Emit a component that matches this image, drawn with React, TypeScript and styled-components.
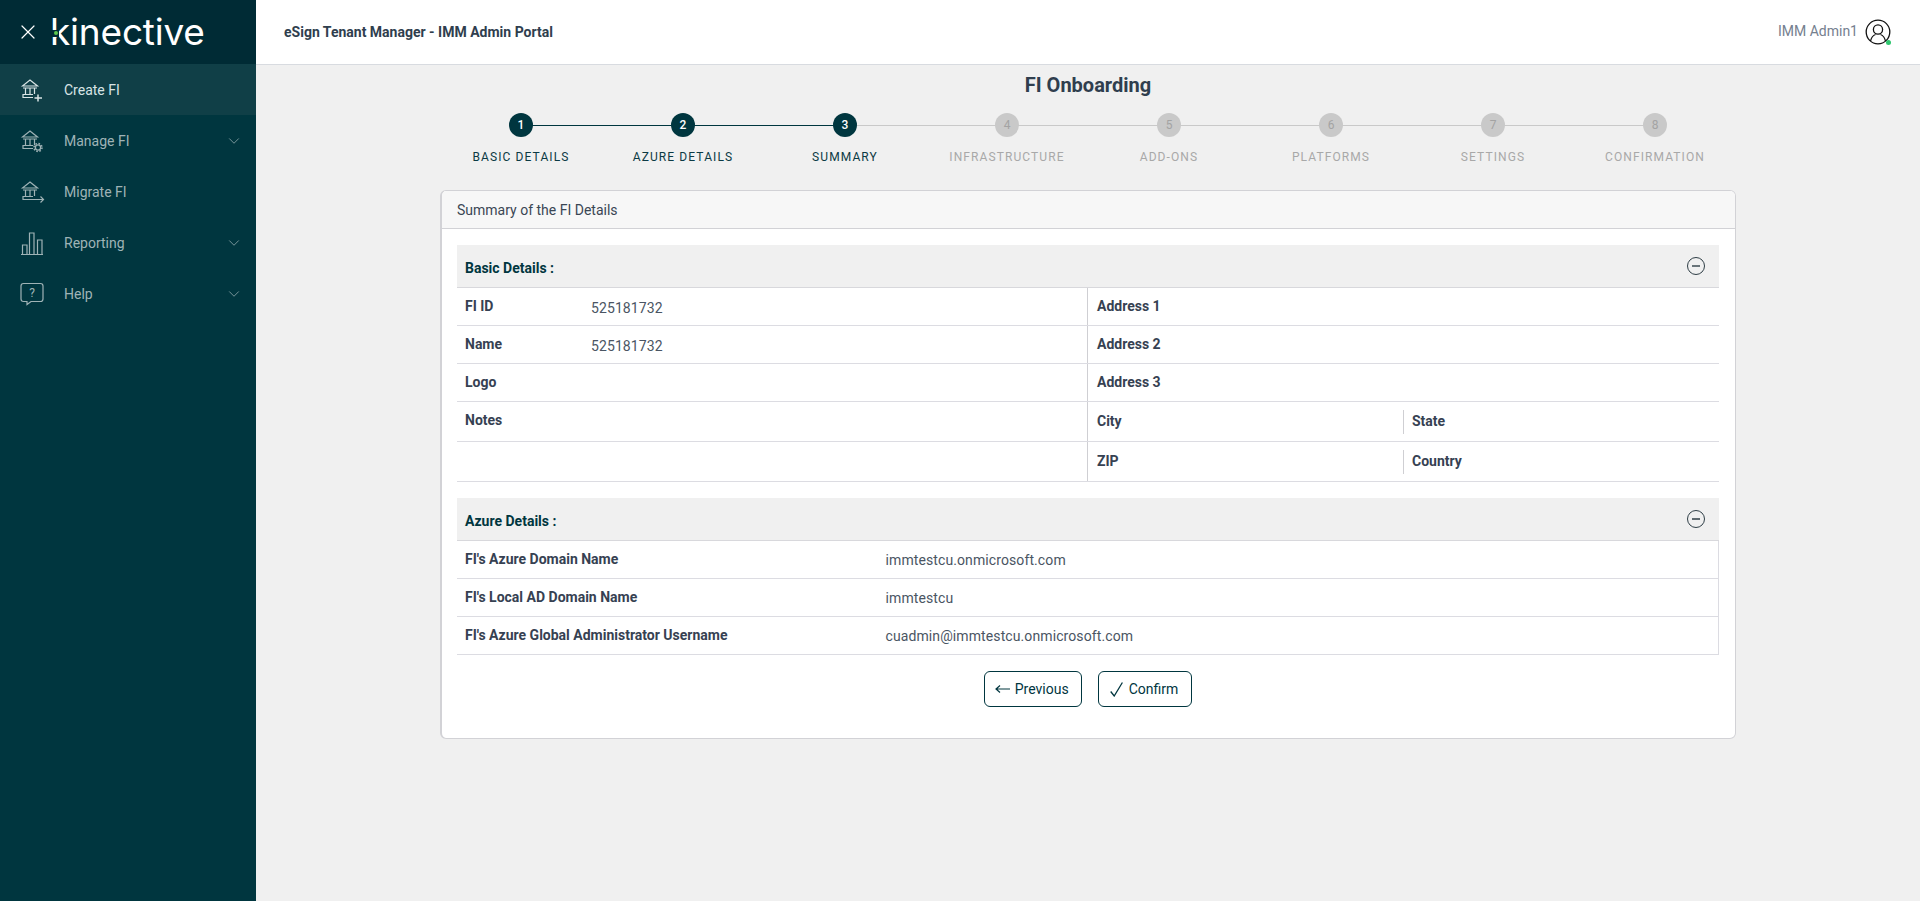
import React from "react";
import styled, { createGlobalStyle } from "styled-components";
import { X, ChevronDown } from "lucide-react";

const GlobalStyle = createGlobalStyle`
  html, body {
    margin: 0;
    padding: 0;
    height: 100%;
    background: #f0f0f0;
    font-family: Roboto, "Liberation Sans", sans-serif;
  }
  * { box-sizing: border-box; }
`;

const STEPS = ["Basic Details", "Azure Details", "Summary", "Infrastructure", "Add-ons", "Platforms", "Settings", "Confirmation"];

const BankBase = () => (
  <>
    <path d="M2.5 9 L10 3 L17.5 9 Z M3 11 H17" />
    <path d="M5.5 11 V17 M10 11 V17 M14.5 11 V17" />
    <path d="M13 17.5 H3 V20.5 H13" />
  </>
);

const NavIcon = ({ name }: { name: string }) => (
  <svg width="26" height="26" viewBox="0 0 26 26" fill="none" stroke="currentColor" strokeWidth="1.2">
    {name === "create" && (
      <>
        <BankBase />
        <path d="M18 17.5 V24.5 M14.5 21 H22" strokeWidth="1.5" />
      </>
    )}
    {name === "manage" && (
      <>
        <BankBase />
        <circle cx="18" cy="19.5" r="2.6" strokeWidth="1.3" />
        <circle cx="18" cy="19.5" r="4" strokeDasharray="1.6 1.54" strokeWidth="1.5" />
      </>
    )}
    {name === "migrate" && (
      <>
        <BankBase />
        <path d="M13 20.5 H23.5 M20.5 17.5 L23.5 20.5 L20.5 23.5" />
      </>
    )}
    {name === "reporting" && (
      <path d="M1 24.5 H23 M2.5 24 V15 H7 V24 M9.5 24 V3 H14 V24 M17.5 24 V10 H22 V24" />
    )}
    {name === "help" && (
      <>
        <path d="M3.5 2.5 H20.5 Q23 2.5 23 5 V18 Q23 20.5 20.5 20.5 H11 L7 23.5 V20.5 H3.5 Q1 20.5 1 18 V5 Q1 2.5 3.5 2.5 Z" />
        <text x="12" y="16" textAnchor="middle" fontSize="12" fill="currentColor" stroke="none" fontFamily="Roboto, sans-serif">?</text>
      </>
    )}
  </svg>
);

const NAV = [
  { key: "create", label: "Create FI", active: true },
  { key: "manage", label: "Manage FI", chevron: true },
  { key: "migrate", label: "Migrate FI" },
  { key: "reporting", label: "Reporting", chevron: true },
  { key: "help", label: "Help", chevron: true },
];

const MinusCircle = () => (
  <svg width="20" height="20" viewBox="0 0 20 20" fill="none" stroke="#2f3e46" strokeWidth="1">
    <circle cx="10" cy="10" r="8.5" />
    <path d="M6 10 H14" strokeWidth="1.4" />
  </svg>
);

export default function App() {
  return (
    <Shell>
      <GlobalStyle />
      <Sidebar>
        <Brand>
          <X size={24} strokeWidth={1.2} color="#ffffff" />
          <Logo>
            kinective
            <LogoDot />
          </Logo>
        </Brand>
        {NAV.map((item) => (
          <NavRow key={item.key} $active={item.active}>
            <NavIcon name={item.key} />
            <NavLabel>{item.label}</NavLabel>
            {item.chevron && <ChevronDown size={18} strokeWidth={1} />}
          </NavRow>
        ))}
      </Sidebar>
      <Main>
        <TopBar>
          <PortalTitle>eSign Tenant Manager - IMM Admin Portal</PortalTitle>
          <UserBox>
            <UserName>IMM Admin1</UserName>
            <UserIcon>
              <svg width="26" height="26" viewBox="0 0 26 26" fill="none" stroke="#111" strokeWidth="1.3">
                <circle cx="13" cy="13" r="11.8" />
                <circle cx="13" cy="10.5" r="4.6" />
                <path d="M5.5 22 C6.5 18 9 16 10.5 15.5 M20.5 22 C19.5 18 17 16 15.5 15.5" />
              </svg>
              <Online />
            </UserIcon>
          </UserBox>
        </TopBar>
        <Content>
          <PageTitle>FI Onboarding</PageTitle>
          <Stepper>
            {STEPS.map((label, i) => (
              <Step key={label} $lineDone={i < 2} $last={i === STEPS.length - 1}>
                <StepDot $done={i < 3}>{i + 1}</StepDot>
                <StepLabel $done={i < 3}>{label}</StepLabel>
              </Step>
            ))}
          </Stepper>
          <Card>
            <CardHeader>Summary of the FI Details</CardHeader>
            <CardBody>
              <SectionHead>
                <SectionTitle>Basic Details :</SectionTitle>
                <MinusCircle />
              </SectionHead>
              <BasicRow>
                <LeftCell><Label>FI ID</Label><Value $low>525181732</Value></LeftCell>
                <RightCell><Label>Address 1</Label></RightCell>
              </BasicRow>
              <BasicRow>
                <LeftCell><Label>Name</Label><Value $low>525181732</Value></LeftCell>
                <RightCell><Label>Address 2</Label></RightCell>
              </BasicRow>
              <BasicRow>
                <LeftCell><Label>Logo</Label></LeftCell>
                <RightCell><Label>Address 3</Label></RightCell>
              </BasicRow>
              <BasicRow $tall>
                <LeftCell><Label $lift>Notes</Label></LeftCell>
                <RightCell>
                  <HalfCell><Label>City</Label></HalfCell>
                  <HalfCell $divided><Label>State</Label></HalfCell>
                </RightCell>
              </BasicRow>
              <BasicRow $tall>
                <LeftCell />
                <RightCell>
                  <HalfCell><Label>ZIP</Label></HalfCell>
                  <HalfCell $divided><Label>Country</Label></HalfCell>
                </RightCell>
              </BasicRow>
              <SectionHead $spaced>
                <SectionTitle>Azure Details :</SectionTitle>
                <MinusCircle />
              </SectionHead>
              <AzureRow><Label>FI's Azure Domain Name</Label><Value>immtestcu.onmicrosoft.com</Value></AzureRow>
              <AzureRow><Label>FI's Local AD Domain Name</Label><Value>immtestcu</Value></AzureRow>
              <AzureRow><Label>FI's Azure Global Administrator Username</Label><Value>cuadmin@immtestcu.onmicrosoft.com</Value></AzureRow>
              <Actions>
                <ActionButton $pad="0 12px 0 10px" $gap="5px">
                  <svg width="15" height="10" viewBox="0 0 15 10" fill="none" stroke="#00363f" strokeWidth="1.2">
                    <path d="M15 5 H1 M5 1.5 L1 5 L5 8.5" />
                  </svg>
                  Previous
                </ActionButton>
                <ActionButton $pad="0 13px 0 11px" $gap="6px">
                  <svg width="13" height="15" viewBox="0 0 13 15" fill="none" stroke="#00363f" strokeWidth="1.3">
                    <path d="M0.7 9.5 L4.2 14 L12.4 0.5" />
                  </svg>
                  Confirm
                </ActionButton>
              </Actions>
            </CardBody>
          </Card>
        </Content>
      </Main>
    </Shell>
  );
}

const Shell = styled.div`
  display: flex;
  min-height: 901px;
`;
const Sidebar = styled.aside`
  flex: 0 0 256px;
  background: #00363f;
`;
const Brand = styled.div`
  display: flex;
  align-items: center;
  gap: 10px;
  height: 64px;
  padding-left: 16px;
  background: #002b35;
`;
const Logo = styled.div`
  position: relative;
  font-family: Inter, sans-serif;
  font-size: 37px;
  font-weight: 400;
  letter-spacing: -0.2px;
  color: #ffffff;
  line-height: 40px;
`;
const LogoDot = styled.span`
  position: absolute;
  left: 1px;
  top: 18px;
  width: 8px;
  height: 7px;
  background: #002b35;
  &::after {
    content: "";
    position: absolute;
    left: 2.5px;
    top: 1px;
    width: 4px;
    height: 4px;
    border-radius: 50%;
    background: #5cc84f;
  }
`;
const NavRow = styled.div<{ $active?: boolean }>`
  display: flex;
  align-items: center;
  height: 51px;
  padding: 0 13px 0 20px;
  color: ${(p) => (p.$active ? "#d8e4e5" : "#9fb3b6")};
  background: ${(p) => (p.$active ? "#103f47" : "transparent")};
`;
const NavLabel = styled.span`
  flex: 1;
  margin-left: 18px;
  font-size: 14px;
`;
const Main = styled.div`
  flex: 1;
  min-width: 0;
`;
const TopBar = styled.header`
  display: flex;
  align-items: center;
  justify-content: space-between;
  height: 65px;
  padding: 0 29px 0 28px;
  background: #ffffff;
  border-bottom: 1px solid #d8dbe0;
`;
const PortalTitle = styled.div`
  font-size: 14px;
  font-weight: 700;
  color: #2f3e4e;
`;
const UserBox = styled.div`
  display: flex;
  align-items: center;
  gap: 7px;
`;
const UserName = styled.span`
  padding-bottom: 2px;
  font-size: 14px;
  color: #75808f;
`;
const UserIcon = styled.div`
  position: relative;
  width: 26px;
  height: 26px;
`;
const Online = styled.span`
  position: absolute;
  right: 0;
  bottom: 0;
  width: 5px;
  height: 5px;
  border-radius: 50%;
  background: #2ec66e;
`;
const Content = styled.main`
  width: 1296px;
  margin-left: 184px;
`;
const PageTitle = styled.h1`
  margin: 8px 0 0;
  font-size: 20px;
  line-height: 24px;
  font-weight: 700;
  text-align: center;
  color: #2f3e4e;
`;
const Stepper = styled.div`
  display: grid;
  grid-template-columns: repeat(8, 1fr);
  margin-top: 16px;
`;
const Step = styled.div<{ $lineDone: boolean; $last: boolean }>`
  position: relative;
  display: flex;
  flex-direction: column;
  align-items: center;
  &::after {
    content: "";
    display: ${(p) => (p.$last ? "none" : "block")};
    position: absolute;
    top: 12px;
    left: 50%;
    width: 100%;
    height: 1px;
    background: ${(p) => (p.$lineDone ? "#00363f" : "#c9c9c9")};
  }
`;
const StepDot = styled.div<{ $done: boolean }>`
  position: relative;
  z-index: 1;
  width: 24px;
  height: 24px;
  border-radius: 50%;
  display: flex;
  align-items: center;
  justify-content: center;
  font-size: 12px;
  font-weight: ${(p) => (p.$done ? 500 : 400)};
  color: ${(p) => (p.$done ? "#ffffff" : "#a3a3a3")};
  background: ${(p) => (p.$done ? "#00363f" : "#c9c9c9")};
`;
const StepLabel = styled.div<{ $done: boolean }>`
  margin-top: 12px;
  font-size: 12px;
  line-height: 16px;
  letter-spacing: 1.1px;
  text-transform: uppercase;
  color: ${(p) => (p.$done ? "#0c3a44" : "#a8a8a8")};
`;
const Card = styled.section`
  margin-top: 25px;
  background: #ffffff;
  border: 1px solid #d2d2d6;
  border-left-width: 2px;
  border-radius: 6px;
  overflow: hidden;
`;
const CardHeader = styled.div`
  height: 38px;
  padding: 0 15px;
  display: flex;
  align-items: center;
  font-size: 14px;
  color: #3a4654;
  background: #f7f7f7;
  border-bottom: 1px solid #d2d2d6;
`;
const CardBody = styled.div`
  padding: 16px 16px 31px 15px;
`;
const SectionHead = styled.div<{ $spaced?: boolean }>`
  display: flex;
  align-items: center;
  justify-content: space-between;
  height: 43px;
  margin-top: ${(p) => (p.$spaced ? "16px" : "0")};
  padding: 0 13px 0 8px;
  background: #f0f0f0;
  border-bottom: 1px solid #d8d8dc;
`;
const SectionTitle = styled.div`
  padding-top: 4px;
  font-size: 14px;
  font-weight: 700;
  color: #00363f;
`;
const BasicRow = styled.div<{ $tall?: boolean }>`
  display: grid;
  grid-template-columns: 630px 1fr;
  height: ${(p) => (p.$tall ? "40px" : "38px")};
  border-bottom: 1px solid #dcdce2;
`;
const LeftCell = styled.div`
  display: flex;
  align-items: center;
  padding-left: 8px;
`;
const RightCell = styled.div`
  display: grid;
  grid-template-columns: 306px 1fr;
  align-items: center;
  padding-left: 9px;
  border-left: 1px solid #cfcfd3;
`;
const HalfCell = styled.div<{ $divided?: boolean }>`
  display: flex;
  align-items: center;
  height: 24px;
  padding-left: ${(p) => (p.$divided ? "8px" : "0")};
  border-left: ${(p) => (p.$divided ? "1px solid #cfcfd3" : "none")};
`;
const Label = styled.span<{ $lift?: boolean }>`
  flex: 0 0 auto;
  min-width: 126px;
  padding-bottom: ${(p) => (p.$lift ? "4px" : "2px")};
  font-size: 14px;
  font-weight: 700;
  color: #364152;
`;
const Value = styled.span<{ $low?: boolean }>`
  padding-top: ${(p) => (p.$low ? "2px" : "0")};
  font-size: 14px;
  letter-spacing: 0.1px;
  color: #4a5563;
`;
const AzureRow = styled.div`
  display: flex;
  align-items: center;
  height: 38px;
  padding-left: 8px;
  border-bottom: 1px solid #dcdce2;
  border-right: 1px solid #dcdce2;
  ${Label} {
    width: 420.5px;
  }
`;
const Actions = styled.div`
  display: flex;
  justify-content: center;
  gap: 16px;
  margin-top: 16px;
`;
const ActionButton = styled.button<{ $pad: string; $gap: string }>`
  display: inline-flex;
  align-items: center;
  gap: ${(p) => p.$gap};
  height: 36px;
  padding: ${(p) => p.$pad};
  font-family: inherit;
  font-size: 14px;
  color: #00363f;
  background: #ffffff;
  border: 1px solid #00363f;
  border-radius: 6px;
`;
